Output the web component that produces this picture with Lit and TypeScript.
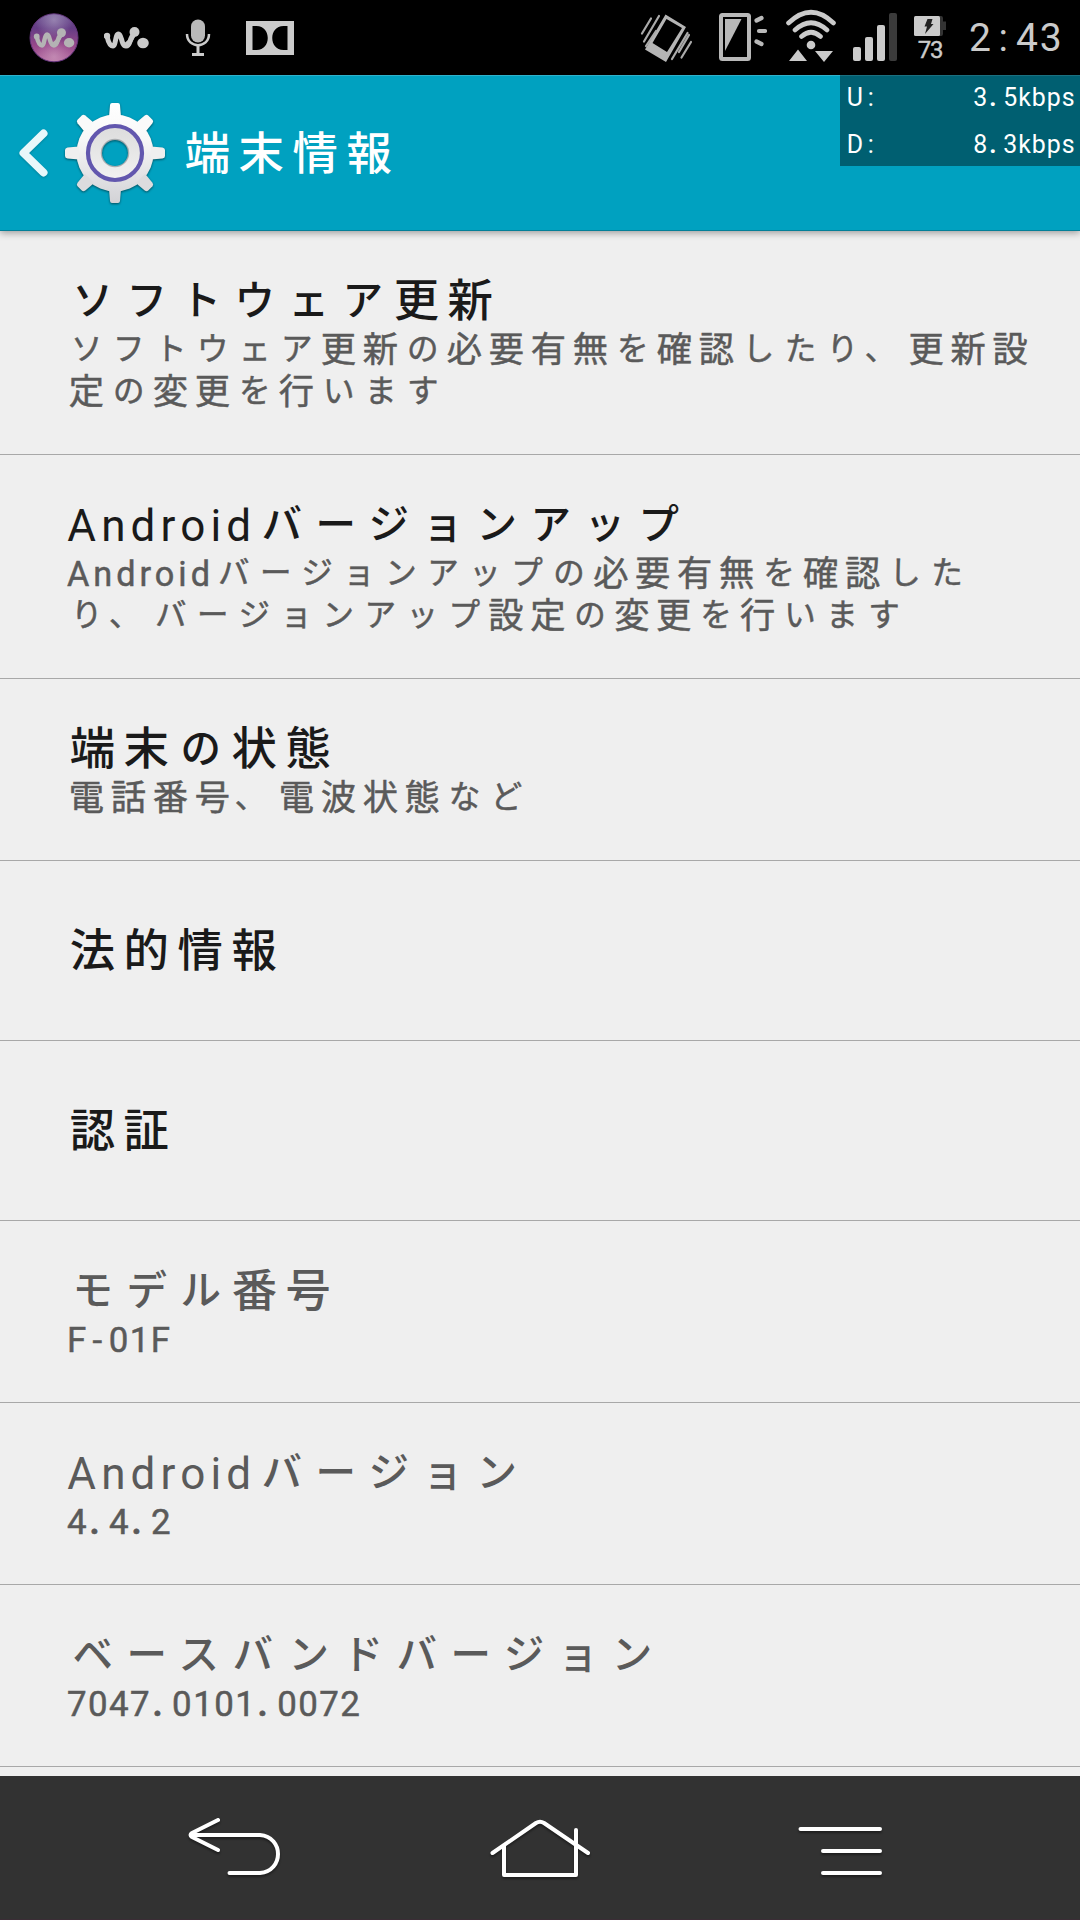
import { LitElement, html, css, svg } from "lit";
import { customElement, property } from "lit/decorators.js";

type Row = { title: string; lines: string[]; muted?: boolean };

const ROWS: Row[] = [
  { title: "ソフトウェア更新", lines: ["ソフトウェア更新の必要有無を確認したり、更新設", "定の変更を行います"] },
  { title: "Androidバージョンアップ", lines: ["Androidバージョンアップの必要有無を確認した", "り、バージョンアップ設定の変更を行います"] },
  { title: "端末の状態", lines: ["電話番号、電波状態など"] },
  { title: "法的情報", lines: [] },
  { title: "認証", lines: [] },
  { title: "モデル番号", lines: ["F-01F"], muted: true },
  { title: "Androidバージョン", lines: ["4.4.2"], muted: true },
  { title: "ベースバンドバージョン", lines: ["7047.0101.0072"], muted: true },
];

/* Splits a string into kana, kanji, letter, digit and punctuation runs; every
   run keeps the pitch of one em per wide character and half an em per narrow one. */
@customElement("pitch-text")
export class PitchText extends LitElement {
  @property() text = "";
  static styles = css`
    :host { display: inline-block; white-space: nowrap; }
    span { line-height: 1; }
    .kanji { font-size: .84em; letter-spacing: .19em; margin-left: .08em; margin-right: -.08em; }
    .kana, .comma { font-size: .75em; letter-spacing: .3333em; vertical-align: .045em; }
    .kana { margin-left: .16em; margin-right: -.16em; }
    .comma { margin-left: .03em; margin-right: -.03em; }
    .word { font-size: .815em; letter-spacing: .117em; font-weight: 400; margin-left: .03em; margin-right: -.03em; }
    .num { font-size: .83em; letter-spacing: .041em; margin-left: .03em; margin-right: -.03em; }
    .punct { font-size: .83em; display: inline-block; width: .6024em; text-align: center; }
    .dot { box-sizing: border-box; text-align: left; padding-left: .07em; font-weight: 700; }
  `;
  render() {
    const runs = this.text.match(/、|[\u3003-\u30ff]+|[\u4e00-\u9fff]+|[a-zA-Z]{2,}|[a-zA-Z0-9]+|[.:\-]/g) ?? [];
    return runs.map((r) => {
      const c = r[0];
      const cls = c === "、" ? "comma" : c >= "\u4e00" ? "kanji" : c >= "\u3000" ? "kana" : c === "." ? "punct dot"
        : c === ":" || c === "-" ? "punct" : r.length > 1 && /^[a-zA-Z]/.test(r) ? "word" : "num";
      return html`<span class=${cls}>${r}</span>`;
    });
  }
}

const walkman = svg`
  <path d="M107 36 C108 41 110 46 113 46 C116 46 115 34 118.500 34 C122 34 121 46 126 46 C131 46 129 38 134 34" fill="none" stroke="currentColor" stroke-width="5" stroke-linecap="round"/>
  <circle cx="134.500" cy="32" r="5"/><circle cx="107" cy="36" r="3.200"/>
  <path d="M122 45 L134 35 L135 37 L130 46Z"/>
  <ellipse cx="143" cy="43" rx="5.800" ry="5.200"/>`;

@customElement("status-bar")
export class StatusBar extends LitElement {
  static styles = css`
    :host { display: flex; height: 75px; background: #000; color: #cbcbcb; }
    svg { display: block; flex: none; height: 75px; fill: currentColor; }
    .left { display: flex; gap: 20px; padding-left: 28px; }
    .mic { margin-left: 5px; }
    .right { display: flex; gap: 10px; margin-left: auto; padding-right: 18px; }
    .vibrate { margin-right: 11px; }
    .rotate { margin-right: 6px; }
    .signal { margin-right: 3px; }
    .battery { display: flex; flex-direction: column; align-items: center; width: 36px; padding-top: 15px; box-sizing: border-box; }
    .battery svg { height: 22px; }
    .pct { font: 400 24px/24px Roboto, sans-serif; letter-spacing: -1.2px; margin-top: 1px; -webkit-text-stroke: .4px; }
    .clock { font-family: Roboto, sans-serif; font-size: 47px; line-height: 70px; margin-left: 10px; }
  `;
  render() {
    return html`
      <div class="left">
        <svg width="56" viewBox="28 0 56 75">
          <defs>
            <linearGradient id="orb" x1="0" y1="0" x2="0" y2="1">
              <stop offset="0" stop-color="#6e5392"/><stop offset=".3" stop-color="#643c84"/>
              <stop offset=".65" stop-color="#95488a"/><stop offset="1" stop-color="#b46aa0"/>
            </linearGradient>
            <radialGradient id="gloss" cy=".12" r=".4"><stop offset="0" stop-color="#a99abf" stop-opacity=".7"/><stop offset="1" stop-color="#a99abf" stop-opacity="0"/></radialGradient>
            <radialGradient id="glow" cy=".9" r=".4"><stop offset="0" stop-color="#d0a3c2" stop-opacity=".6"/><stop offset="1" stop-color="#d0a3c2" stop-opacity="0"/></radialGradient>
          </defs>
          <circle cx="54" cy="37.800" r="24" fill="url(#orb)" stroke="#63357c"/>
          <circle cx="54" cy="37.800" r="23.500" fill="url(#gloss)"/>
          <circle cx="54" cy="37.800" r="23.500" fill="url(#glow)"/>
          <g transform="translate(-59.600 4) scale(.9)" color="#b4b4b4" fill="#b4b4b4">${walkman}</g>
        </svg>
        <svg width="52" viewBox="104 0 52 75">${walkman}</svg>
        <svg class="mic" width="34" viewBox="181 0 34 75">
          <rect x="191" y="19.500" width="14" height="23" rx="7" fill="#b9b9b9"/>
          <path d="M187 34 C187 49 209 49 209 34" fill="none" stroke="currentColor" stroke-width="2.500"/>
          <path d="M196.500 45h3v8h4.500v3h-12v-3h4.500z"/>
        </svg>
        <svg width="60" viewBox="235 0 60 75">
          <path fill-rule="evenodd" d="M246 21h48v34h-48z M252.500 26v24h4c15 0 15 -24 0 -24z M287.500 26v24h-4c-15 0 -15 -24 0 -24z"/>
        </svg>
      </div>
      <div class="right">
        <svg class="vibrate" width="56" viewBox="640 0 56 75" fill="none">
          <path fill-rule="evenodd" d="M665.500 14.500 L686 27 L666 62 L645 49.500Z M666.500 19 L652.500 43 L667 52 L682 28Z" fill="#b5b5b5"/>
          <path d="M651 18.500 L642 33.500 M659 16 L644 41.500 M656 31 L646 46 M687.500 33 L672 59 M689 35 L679 52 M691 42 L681.500 57.500" stroke="#aaa" stroke-width="2.200" stroke-linecap="round"/>
        </svg>
        <svg class="rotate" width="50" viewBox="716 0 50 75">
          <rect x="720" y="15" width="28" height="44" rx="1.500" fill="none" stroke="#b9b9b9" stroke-width="4"/>
          <path d="M724 19h16.500L724 51z" fill="#b9b9b9"/>
          <path d="M755.500 20.500l5 -2.500M758 31h6M755.500 41.500l5 2.500" stroke="#b9b9b9" stroke-width="4.200" stroke-linecap="round"/>
        </svg>
        <svg width="56" viewBox="782 0 56 75">
          <path d="M787.500 23 Q810 1.500 832.500 23 M794 30 Q810 15.500 826 30 M800.500 36.500 Q810 28 819.500 36.500" fill="none" stroke="currentColor" stroke-width="4.600" stroke-linecap="round"/>
          <circle cx="810" cy="45" r="4.300"/>
          <path d="M788 61h18l-9 -11.500zM814 51h18l-9 11z"/>
        </svg>
        <svg class="signal" width="50" viewBox="848 0 50 75">
          <rect x="852" y="47" width="8" height="14" rx="2"/><rect x="864" y="37" width="8" height="24" rx="2"/>
          <rect x="876" y="25" width="8" height="36" rx="2"/><rect x="888" y="13" width="8" height="48" rx="2" fill="#3b3b3b"/>
        </svg>
        <div class="battery">
          <svg width="34" viewBox="913 15 34 22">
            <path d="M936 16h5q2 0 2 2v3.500h3v8.500h-3v4q0 2 -2 2h-5z" fill="#333"/>
            <rect x="914" y="16" width="26" height="20" rx="1.500"/>
            <path d="M927.500 19h5l-1.500 5h2.500l-8.500 10 2 -7.500h-2.500z" fill="#222"/>
          </svg>
          <span class="pct">73</span>
        </div>
        <pitch-text class="clock" .text=${"2:43"}></pitch-text>
      </div>`;
  }
}

const teeth = [0, 45, 90, 135, 180, 225, 270, 315];

@customElement("title-bar")
export class TitleBar extends LitElement {
  static styles = css`
    :host { display: flex; align-items: center; position: relative; z-index: 1; height: 156px; box-sizing: border-box; background: #00a1c0; border-top: 1px solid #2fb2cc; border-bottom: 1px solid #027f98; box-shadow: 0 2px 7px rgba(0,0,0,.35); color: #fff; }
    svg { display: block; flex: none; }
    .back { margin-left: 16px; filter: drop-shadow(0 1px 1px rgba(0,0,0,.2)); }
    .gear { margin-left: 11px; filter: drop-shadow(0 1.500px 1px rgba(0,0,0,.5)); }
    .heading { margin-left: 14px; font-size: 54px; line-height: 60px; font-weight: 500; padding-bottom: 3px; }
    .speed { position: absolute; top: -1px; right: 0; width: 240px; height: 91px; box-sizing: border-box; padding: 0 5px 0 6px; background: #005f71; border-top: 1px solid #1b7080; display: grid; grid-template-columns: 1fr auto; grid-template-rows: 47px 43px; font-size: 30px; line-height: 40px; }
  `;
  render() {
    return html`
      <svg class="back" width="36" height="56" viewBox="16 125 36 56"><path d="M43.500 133.500 L23.500 153 L43.500 172.500" fill="none" stroke="#e8f7fa" stroke-width="8" stroke-linecap="round" stroke-linejoin="round"/></svg>
      <svg class="gear" width="104" height="104" viewBox="-52 -52 104 104">
        <defs><linearGradient id="metal" gradientUnits="userSpaceOnUse" x1="0" y1="-50" x2="0" y2="50"><stop offset="0" stop-color="#fff"/><stop offset=".35" stop-color="#f8f8f8"/><stop offset="1" stop-color="#d2d2d6"/></linearGradient>
        <linearGradient id="disc" x1="0" y1="0" x2="0" y2="1"><stop offset="0" stop-color="#dcdcdc"/><stop offset="1" stop-color="#f2f2f2"/></linearGradient>
        <mask id="hole"><rect x="-52" y="-52" width="104" height="104" fill="#fff"/><circle r="13" fill="#000"/></mask></defs>
        <g mask="url(#hole)">
          <g fill="url(#metal)">
            <circle r="38.500"/>
            <path d="M-6 -36L-5 -48Q-4.800 -50 -3 -50H3Q4.800 -50 5 -48L6 -36ZM-6 36L-5 48Q-4.800 50 -3 50H3Q4.800 50 5 48L6 36Z"/>
          </g>
          ${teeth.filter((a) => a % 180).map((a) => svg`<path transform="rotate(${a})" fill=${a > 90 && a < 270 ? "#dcdcde" : a % 90 ? "#fafafa" : "#efefef"} d="M-6.500 -36L-5.500 -47.500Q-5 -50 -3 -50H3Q5 -50 5.500 -47.500L6.500 -36Z"/>`)}
          <circle r="27" fill="url(#disc)" stroke="#6257ae" stroke-width="4.200"/>
          <circle r="13.500" fill="none" stroke="#a9adb0" stroke-width="1.500"/>
        </g>
      </svg>
      <pitch-text class="heading" .text=${"端末情報"}></pitch-text>
      <div class="speed">
        <pitch-text .text=${"U:"}></pitch-text><pitch-text .text=${"3.5kbps"}></pitch-text>
        <pitch-text .text=${"D:"}></pitch-text><pitch-text .text=${"8.3kbps"}></pitch-text>
      </div>`;
  }
}

@customElement("nav-bar")
export class NavBar extends LitElement {
  static styles = css`
    :host { display: flex; justify-content: space-between; height: 144px; box-sizing: border-box; padding: 0 194px 0 184px; background: #323232; border-bottom: 1px solid #3a2d35; }
    svg { display: block; fill: none; stroke: #fff; stroke-width: 4; stroke-linecap: round; stroke-linejoin: round; filter: drop-shadow(0 2px 1px rgba(0,0,0,.4)); }
  `;
  render() {
    return html`
      <svg width="100" height="143" viewBox="184 1776 100 143"><path d="M218 1820 L192 1833 Q189 1835 192 1837 L218 1850 M192 1835 H260 C284 1837 284 1871 260 1873 H229.500"/></svg>
      <svg width="104" height="143" viewBox="489 1776 104 143"><path d="M492.500 1853 L536 1823 Q540 1820.500 544 1823 L588 1853 M504 1846 V1875 H576 V1830"/></svg>
      <svg width="88" height="143" viewBox="798 1776 88 143"><path d="M800.500 1829H880M823 1851H880M823 1873H880"/></svg>`;
  }
}

@customElement("app-root")
export class AppRoot extends LitElement {
  static styles = css`
    :host { display: flex; flex-direction: column; width: 1080px; height: 1920px; overflow: hidden; background: #efefef; font-family: Roboto, "Noto Sans CJK JP", sans-serif; }
    .list { flex: 1; display: flex; flex-direction: column; }
    .row { display: flex; flex-direction: column; justify-content: center; height: 182px; box-sizing: border-box; padding: 0 0 4px 66px; border-bottom: 1px solid #a8a8a8; }
    .tall { height: 224px; }
    .single { height: 180px; }
    .title { display: block; height: 56px; font-size: 54px; line-height: 56px; color: #1a1a1a; font-weight: 500; }
    .muted { color: #5a5a5a; }
    .line { display: block; height: 42px; font-size: 42px; line-height: 42px; color: #5a5a5a; -webkit-text-stroke: .5px #5a5a5a; }
  `;
  render() {
    return html`
      <status-bar></status-bar>
      <title-bar></title-bar>
      <main class="list">
        ${ROWS.map((r) => html`
          <section class="row ${r.lines.length === 2 ? "tall" : r.lines.length === 0 ? "single" : ""}">
            <pitch-text class="title ${r.muted ? "muted" : ""}" .text=${r.title}></pitch-text>
            ${r.lines.map((l) => html`<pitch-text class="line" .text=${l}></pitch-text>`)}
          </section>`)}
      </main>
      <nav-bar></nav-bar>`;
  }
}
